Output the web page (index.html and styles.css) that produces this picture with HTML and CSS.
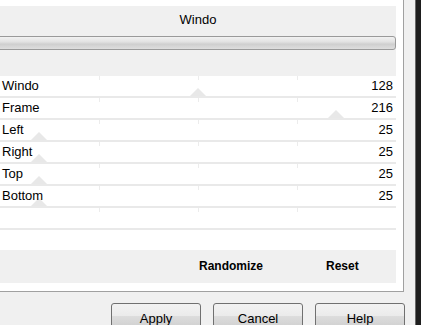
FILE: index.html
```html
<!DOCTYPE html>
<html lang="en">
<head>
  <meta charset="UTF-8">
  <title>Window Frame</title>
  <link rel="stylesheet" href="styles.css">
</head>
<body>

  <div class="dialog">
    <div class="main">
      <div class="group">
        <div class="preview">
          <div class="preview-title">Windo</div>
          <div class="preview-bar"></div>
        </div>

        <div class="params">
          <div class="param">
            <span class="label">Windo</span><span class="value">128</span>
            <i class="thumb" style="left: 198px"></i>
          </div>
          <div class="param">
            <span class="label">Frame</span><span class="value">216</span>
            <i class="thumb" style="left: 336px"></i>
          </div>
          <div class="param">
            <span class="label">Left</span><span class="value">25</span>
            <i class="thumb" style="left: 39px"></i>
          </div>
          <div class="param">
            <span class="label">Right</span><span class="value">25</span>
            <i class="thumb" style="left: 39px"></i>
          </div>
          <div class="param">
            <span class="label">Top</span><span class="value">25</span>
            <i class="thumb" style="left: 39px"></i>
          </div>
          <div class="param">
            <span class="label">Bottom</span><span class="value">25</span>
            <i class="thumb" style="left: 39px"></i>
          </div>
          <div class="param empty"></div>
        </div>

        <div class="tools">
          <span class="tool">Randomize</span>
          <span class="tool">Reset</span>
        </div>
      </div>

      <div class="buttons">
        <button class="btn">Apply</button>
        <button class="btn">Cancel</button>
        <button class="btn">Help</button>
      </div>
    </div>
    <div class="edge"></div>
  </div>

</body>
</html>
```

FILE: styles.css
```css
body {
  margin: 0;
  background: #f0f0f0;
  font-family: 'Liberation Sans', Arial, sans-serif;
  font-size: 13px;
  color: #000;
  overflow: hidden;
}

.dialog {
  display: flex;
  width: 421px;
  height: 325px;
}

.main {
  width: 416px;
}

.edge {
  width: 5px;
  background: #1e1e1e;
  border-left: 1px solid #6a6a6a;
}

.group {
  width: 404px;
  height: 292px;
  background: #fff;
  border-right: 1px solid #a0a0a0;
  border-bottom: 1px solid #a0a0a0;
  padding-top: 6px;
  box-sizing: border-box;
}

.preview {
  width: 396px;
  height: 70px;
  background: #f0f0f0;
}

.preview-title {
  height: 30px;
  line-height: 28px;
  text-align: center;
}

.preview-bar {
  height: 12px;
  margin-left: -4px;
  border: 1px solid #9a9a9a;
  border-radius: 3px;
  background: linear-gradient(#f2f2f2, #e2e2e2 40%, #cfcfcf 60%, #dedede);
}

.params {
  width: 396px;
}

.param {
  position: relative;
  display: flex;
  justify-content: space-between;
  height: 20px;
  line-height: 20px;
  padding: 0 3px 0 2px;
  border-bottom: 2px solid #e9e9e9;
  background:
    linear-gradient(#ececec, #ececec) 99px 0 / 1px 4px no-repeat,
    linear-gradient(#ececec, #ececec) 198px 0 / 1px 4px no-repeat,
    linear-gradient(#ececec, #ececec) 297px 0 / 1px 4px no-repeat,
    #fff;
}

.label, .value {
  position: relative;
  z-index: 1;
}

.thumb {
  position: absolute;
  bottom: 0;
  width: 0;
  height: 0;
  margin-left: -8px;
  border-left: 8px solid transparent;
  border-right: 8px solid transparent;
  border-bottom: 8px solid #e8e8e8;
}

.tools {
  display: flex;
  width: 396px;
  height: 33px;
  margin-top: 20px;
  background: #f0f0f0;
  font-size: 12px;
  font-weight: bold;
  line-height: 33px;
}

.tool:first-child {
  margin-left: 199px;
}

.tool + .tool {
  margin-left: 63px;
}

.buttons {
  display: flex;
  justify-content: flex-end;
  gap: 12px;
  padding: 11px 10px 0 0;
}

.btn {
  width: 90px;
  height: 26px;
  padding: 0;
  border: 1px solid #707070;
  border-radius: 3px;
  background: linear-gradient(#f2f2f2, #ebebeb 50%, #dddddd 50%, #cfcfcf);
  font-family: 'Liberation Sans', Arial, sans-serif;
  font-size: 13px;
  color: #000;
  line-height: 24px;
  padding-top: 3px;
}
```
